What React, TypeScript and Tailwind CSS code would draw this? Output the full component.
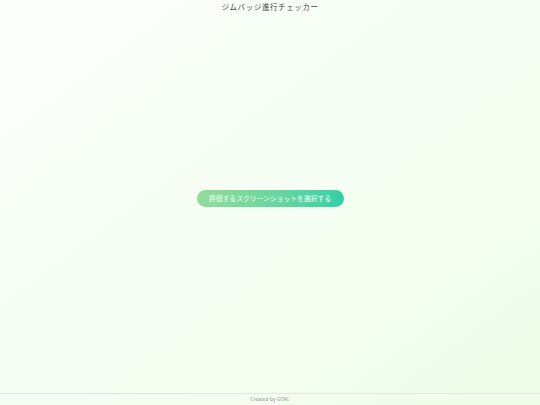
export default function App() {
  return (
    <div
      className="flex min-h-[405px] flex-col bg-gradient-to-br from-[#fbfffb] to-[#effdea] text-[#333]"
      style={{ fontFamily: '"Noto Sans CJK JP", "Noto Sans", sans-serif' }}
    >
      <header className="pt-[1px] text-center">
        <h1 className="text-[7.5px] leading-[12px] tracking-[0.6px] text-[#444]">ジムバッジ進行チェッカー</h1>
      </header>

      <main className="flex flex-1 items-center justify-center pb-[9px]">
        <button className="h-[17px] w-[147px] rounded-full bg-gradient-to-r from-[#93dc98] to-[#2fd0a6] text-[6.8px] leading-[17px] text-white/90">
          評価するスクリーンショットを選択する
        </button>
      </main>

      <footer className="border-t border-[#dfe8dc] pt-[2px] pb-[2px] text-center">
        <p className="text-[4.5px] leading-[7px] tracking-[0.3px] text-[#888]">Created by GOAL</p>
      </footer>
    </div>
  );
}
